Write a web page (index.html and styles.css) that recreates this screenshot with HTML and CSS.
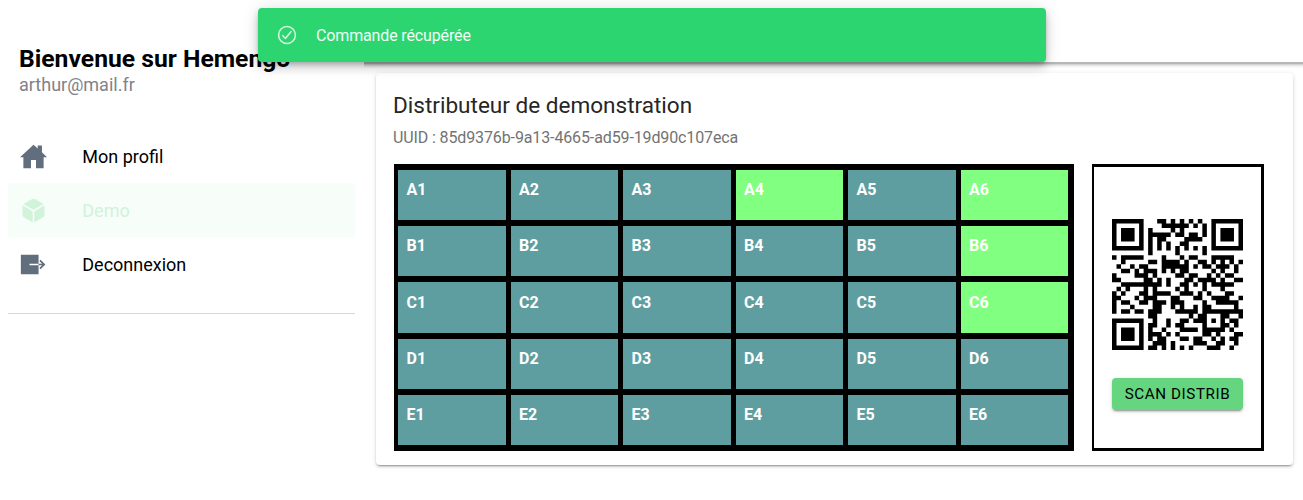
FILE: index.html
```html
<!DOCTYPE html>
<html lang="fr">
<head>
<meta charset="utf-8">
<title>Hemengo</title>
<link rel="stylesheet" href="styles.css">
</head>
<body>
<div class="app">
  <aside class="menu">
    <h1 class="menu-title">Bienvenue sur Hemengo</h1>
    <p class="menu-note">arthur@mail.fr</p>
    <nav class="menu-list">
      <a class="item">
        <svg class="icon" viewBox="0 0 512 512"><path d="M416 174.74V48h-80v58.45L256 32 0 272h64v208h144V320h96v160h144V272h64z"/></svg>
        <span>Mon profil</span>
      </a>
      <a class="item selected">
        <svg class="icon" viewBox="0 0 512 512"><path d="M440.9 136.3a4 4 0 0 0 0-6.91L288.16 40.65a64.14 64.14 0 0 0-64.33 0L71.12 129.39a4 4 0 0 0 0 6.91L254 243.88a4 4 0 0 0 4.06 0zM256 152zM238 270.81L54 163.48a4 4 0 0 0-6 3.46v173.92a48 48 0 0 0 23.84 41.39L234 479.48a4 4 0 0 0 6-3.46V274.27a4 4 0 0 0-2-3.46zM275 270.81L458 163.48a4 4 0 0 1 6 3.46v173.92a48 48 0 0 1-23.84 41.39L278 479.48a4 4 0 0 1-6-3.46V274.27a4 4 0 0 1 3-3.46z"/></svg>
        <span>Demo</span>
      </a>
      <a class="item">
        <svg class="icon" viewBox="0 0 512 512"><path d="M180 240h172V72H16v368h336V272H180zM418 240l-50-50L391 167 480 256 391 345 368 322l50-50H352v-32z"/></svg>
        <span>Deconnexion</span>
      </a>
    </nav>
  </aside>
  <main class="main">
    <header class="toolbar"></header>
    <section class="card">
      <h2 class="card-title">Distributeur de demonstration</h2>
      <p class="card-subtitle">UUID : 85d9376b-9a13-4665-ad59-19d90c107eca</p>
      <div class="card-body">
        <div class="slots">
          <div class="slot">A1</div><div class="slot">A2</div><div class="slot">A3</div><div class="slot free">A4</div><div class="slot">A5</div><div class="slot free">A6</div>
          <div class="slot">B1</div><div class="slot">B2</div><div class="slot">B3</div><div class="slot">B4</div><div class="slot">B5</div><div class="slot free">B6</div>
          <div class="slot">C1</div><div class="slot">C2</div><div class="slot">C3</div><div class="slot">C4</div><div class="slot">C5</div><div class="slot free">C6</div>
          <div class="slot">D1</div><div class="slot">D2</div><div class="slot">D3</div><div class="slot">D4</div><div class="slot">D5</div><div class="slot">D6</div>
          <div class="slot">E1</div><div class="slot">E2</div><div class="slot">E3</div><div class="slot">E4</div><div class="slot">E5</div><div class="slot">E6</div>
        </div>
        <div class="panel">
          <svg class="qr" viewBox="0 0 29 29"><path id="qr-modules"/></svg>
          <button class="scan">SCAN DISTRIB</button>
        </div>
      </div>
    </section>
  </main>
</div>
<div class="toast">
  <svg class="toast-icon" viewBox="0 0 512 512"><circle cx="256" cy="256" r="196"/><path d="M352 176L217.600 336 160 272"/></svg>
  <span>Commande récupérée</span>
</div>
<script src="qr.js"></script>
</body>
</html>
```
FILE: styles.css
```css
* { box-sizing: border-box; }

body {
  margin: 0;
  height: 500px;
  overflow: hidden;
  background: #fff;
  font-family: Roboto, "Liberation Sans", sans-serif;
}

.app { display: flex; height: 500px; }

.menu {
  width: 364px;
  flex: none;
  padding: 44px 9px 0 8px;
}

.menu-title {
  margin: 0;
  padding-left: 11px;
  font-size: 24.7px;
  line-height: 30px;
  font-weight: 700;
  white-space: nowrap;
}

.menu-note {
  margin: 0;
  padding-left: 11px;
  font-size: 18px;
  line-height: 22px;
  color: #808289;
}

.menu-list {
  margin-top: 33px;
  height: 185px;
  border-bottom: 1px solid #d7d7d7;
}

.item {
  display: flex;
  align-items: center;
  height: 54px;
  padding-left: 12px;
  gap: 35.3px;
  border-radius: 4px;
  font-size: 18px;
  color: #000;
}

.icon { width: 27px; height: 27px; margin-top: 1px; fill: #616e7e; }
.selected { background: #f7fdf9; color: #d0f3d9; }
.selected .icon { fill: #d0f3d9; }

.main { flex: 1; min-width: 0; }

.toolbar {
  height: 62px;
  box-shadow: 0 2px 0 #b7b7b7, 0 3px 0 #d4d4d4, 0 4px 0 #e5e5e5, 0 5px 0 #f3f3f3, 0 6px 0 #fafafa;
}

.card {
  margin: 11px 10px 0 12px;
  height: 392px;
  padding: 19px 18px 0;
  border-radius: 4px;
  background: #fff;
  box-shadow: 0 3px 1px -2px rgba(0,0,0,.2), 0 2px 2px 0 rgba(0,0,0,.14), 0 1px 5px 0 rgba(0,0,0,.12);
}

.card-title {
  margin: 0 0 0 -1px;
  font-size: 22.55px;
  line-height: 27px;
  font-weight: 400;
  color: #262626;
}

.card-subtitle {
  margin: 9px 0 0 -1px;
  font-size: 16px;
  line-height: 20px;
  letter-spacing: -.12px;
  color: #737373;
}

.card-body { display: flex; gap: 18px; margin-top: 16px; }

.slots {
  display: grid;
  width: 680px;
  height: 287px;
  padding: 5.9px 5.6px 5.9px 4.4px;
  grid-template-columns: repeat(6, 1fr);
  grid-template-rows: repeat(5, 1fr);
  gap: 6px 5px;
  background: #000;
}

.slot {
  padding: 10.3px 8px 0;
  background: #5f9ea0;
  color: #fff;
  font-size: 16px;
  line-height: 20px;
  font-weight: 700;
  letter-spacing: .2px;
}

.free { background: #80ff80; }

.panel {
  display: flex;
  flex-direction: column;
  width: 172px;
  height: 287px;
  padding: 52px 18px 0;
  border: 3px solid #000;
  border-left-width: 2px;
}

.qr { width: 131px; height: 131px; }

.scan {
  width: 131px;
  height: 32px;
  margin-top: 28px;
  padding: 0;
  border: 0;
  border-radius: 4px;
  background: #65d67f;
  box-shadow: 0 3px 1px -2px rgba(0,0,0,.2), 0 2px 2px 0 rgba(0,0,0,.14), 0 1px 5px 0 rgba(0,0,0,.12);
  color: #000;
  font: 400 15.2px Roboto, sans-serif;
  letter-spacing: .6px;
}

.toast {
  position: absolute;
  left: 258px;
  top: 8px;
  display: flex;
  align-items: center;
  gap: 18px;
  width: 788px;
  height: 54px;
  padding-left: 18px;
  border-radius: 4px;
  background: #2dd570;
  box-shadow: 0 3px 5px -1px rgba(0,0,0,.2), 0 6px 10px 0 rgba(0,0,0,.14), 0 1px 18px 0 rgba(0,0,0,.12);
  color: #f2fdf6;
  font-size: 16px;
  letter-spacing: -.14px;
}

.toast-icon {
  width: 22px;
  height: 22px;
  fill: none;
  stroke: #d5f7e2;
  stroke-width: 36;
  stroke-linecap: round;
  stroke-linejoin: round;
}
```
FILE: qr.js
```js
// QR code, version 3, error correction M, mask 2.
const SIZE = 29, DATA = 44, ECC = 26;

function encode(text) {
  const bits = [];
  const push = (v, n) => { for (let i = n - 1; i >= 0; i--) bits.push((v >> i) & 1); };
  push(4, 4);
  push(text.length, 8);
  for (const ch of text) push(ch.charCodeAt(0), 8);
  push(0, 4);
  while (bits.length % 8) bits.push(0);
  const bytes = [];
  for (let i = 0; i < bits.length; i += 8) bytes.push(parseInt(bits.slice(i, i + 8).join(''), 2));
  for (let p = 0xec; bytes.length < DATA; p ^= 0xec ^ 0x11) bytes.push(p);
  return bytes;
}

function mul(a, b) {
  let r = 0;
  for (let i = 7; i >= 0; i--) {
    r = (r << 1) ^ ((r >> 7) * 0x11d);
    r ^= ((b >> i) & 1) * a;
  }
  return r;
}

function correction(data) {
  const gen = new Array(ECC).fill(0);
  gen[ECC - 1] = 1;
  let root = 1;
  for (let i = 0; i < ECC; i++) {
    for (let j = 0; j < ECC; j++) {
      gen[j] = mul(gen[j], root);
      if (j + 1 < ECC) gen[j] ^= gen[j + 1];
    }
    root = mul(root, 2);
  }
  const rem = new Array(ECC).fill(0);
  for (const b of data) {
    const f = b ^ rem.shift();
    rem.push(0);
    gen.forEach((g, i) => { rem[i] ^= mul(g, f); });
  }
  return rem;
}

function matrix(text) {
  const m = Array.from({ length: SIZE }, () => new Array(SIZE).fill(null));
  const finder = (r0, c0) => {
    for (let r = -4; r <= 4; r++) for (let c = -4; c <= 4; c++) {
      const y = r0 + r, x = c0 + c;
      if (y < 0 || x < 0 || y >= SIZE || x >= SIZE) continue;
      const d = Math.max(Math.abs(r), Math.abs(c));
      m[y][x] = d !== 2 && d !== 4 ? 1 : 0;
    }
  };
  finder(3, 3); finder(3, 25); finder(25, 3);
  for (let i = 8; i < 21; i++) m[6][i] = m[i][6] = i % 2 ? 0 : 1;
  for (let r = -2; r <= 2; r++) for (let c = -2; c <= 2; c++)
    m[22 + r][22 + c] = Math.max(Math.abs(r), Math.abs(c)) === 1 ? 0 : 1;

  const f = [...'101111001111100'].map(Number);
  const first = [[8,0],[8,1],[8,2],[8,3],[8,4],[8,5],[8,7],[8,8],[7,8],[5,8],[4,8],[3,8],[2,8],[1,8],[0,8]];
  f.forEach((b, i) => {
    m[first[i][0]][first[i][1]] = b;
    if (i < 7) m[28 - i][8] = b; else m[8][14 + i] = b;
  });
  m[21][8] = 1;

  const data = encode(text);
  const all = data.concat(correction(data));
  let n = 0;
  for (let right = 28; right >= 1; right -= 2) {
    if (right === 6) right = 5;
    const up = ((right + 1) & 2) === 0;
    for (let v = 0; v < SIZE; v++) for (let j = 0; j < 2; j++) {
      const x = right - j, y = up ? SIZE - 1 - v : v;
      if (m[y][x] !== null) continue;
      const bit = n < all.length * 8 ? (all[n >> 3] >> (7 - (n & 7))) & 1 : 0;
      n++;
      m[y][x] = bit ^ (x % 3 === 0 ? 1 : 0);
    }
  }
  return m;
}

let d = '';
matrix('85d9376b-9a13-4665-ad59-19d90c107eca').forEach((row, y) => {
  for (let x = 0; x < SIZE; x++) {
    if (!row[x]) continue;
    let w = 1;
    while (row[x + w]) w++;
    d += `M${x} ${y}h${w}v1h-${w}z`;
    x += w;
  }
});
document.getElementById('qr-modules').setAttribute('d', d);
```
